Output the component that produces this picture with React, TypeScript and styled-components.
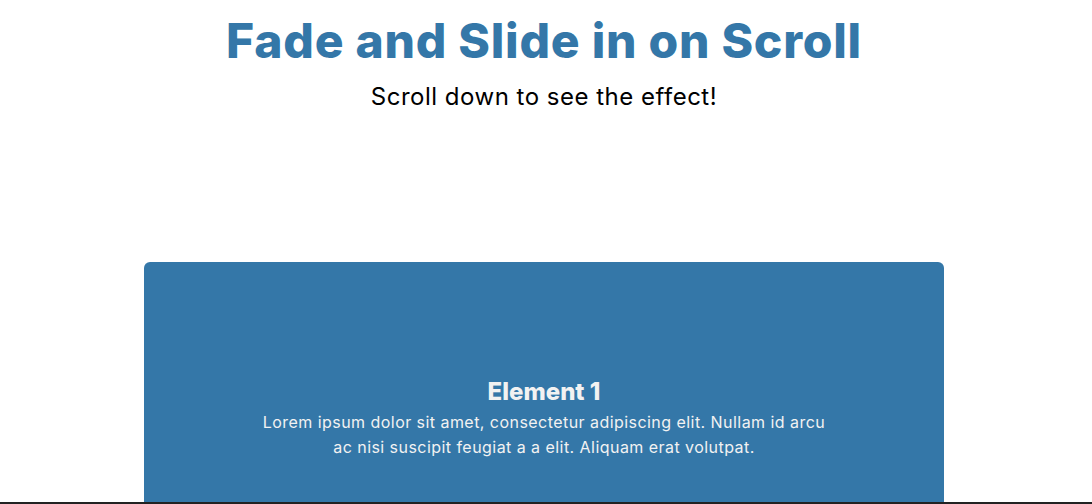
import React from 'react';
import styled, { createGlobalStyle } from 'styled-components';

const GlobalStyle = createGlobalStyle`
  html, body {
    margin: 0;
    padding: 0;
    background: #ffffff;
    overflow: hidden;
  }
  body {
    font-family: Inter, "Open Sans", sans-serif;
    color: #000000;
  }
`;

const Page = styled.div`
  display: flex;
  flex-direction: column;
  align-items: center;
  height: 504px;
  padding-right: 4px;
  overflow: hidden;
`;

const Header = styled.header`
  display: flex;
  flex-direction: column;
  align-items: center;
  padding-top: 11px;
`;

const Title = styled.h1`
  margin: 0;
  font-family: Inter, sans-serif;
  font-weight: 800;
  font-size: 48px;
  line-height: 60px;
  letter-spacing: 0.75px;
  color: #3477a8;
`;

const Subtitle = styled.p`
  margin: 10px 0 0;
  font-family: Inter, sans-serif;
  font-weight: 400;
  font-size: 24px;
  line-height: 32px;
  letter-spacing: 0.5px;
  color: #000000;
`;

const Spacer = styled.div`
  height: 149px;
  flex-shrink: 0;
`;

const Card = styled.section`
  width: 800px;
  min-height: 300px;
  flex-shrink: 0;
  box-sizing: border-box;
  padding-top: 12px;
  background: #3477a8;
  border-radius: 6px;
  display: flex;
  flex-direction: column;
  align-items: center;
  justify-content: center;
  text-align: center;
  color: #f2f2f2;
`;

const CardTitle = styled.h2`
  margin: 0 0 3px;
  font-family: Inter, sans-serif;
  font-weight: 800;
  font-size: 24px;
  line-height: 30px;
`;

const CardText = styled.p`
  margin: 0;
  font-family: Inter, sans-serif;
  font-size: 16px;
  line-height: 25px;
  letter-spacing: 0.45px;
`;

const BottomEdge = styled.div`
  position: fixed;
  left: 0;
  right: 0;
  bottom: 0;
  height: 2px;
  background: #222222;
`;

export default function App() {
  return (
    <>
      <GlobalStyle />
      <Page>
        <Header>
          <Title>Fade and Slide in on Scroll</Title>
          <Subtitle>Scroll down to see the effect!</Subtitle>
        </Header>
        <Spacer />
        <Card>
          <CardTitle>Element 1</CardTitle>
          <CardText>
            Lorem ipsum dolor sit amet, consectetur adipiscing elit. Nullam id arcu
            <br />
            ac nisi suscipit feugiat a a elit. Aliquam erat volutpat.
          </CardText>
        </Card>
      </Page>
      <BottomEdge />
    </>
  );
}
